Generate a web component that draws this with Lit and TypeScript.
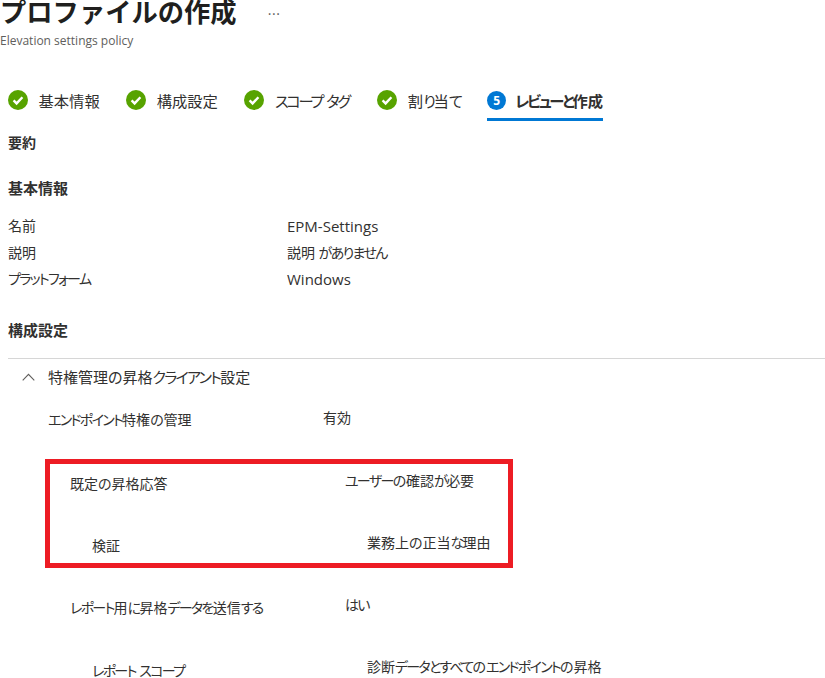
import { LitElement, html, css } from "lit";
import { customElement } from "lit/decorators.js";

const check = html`<svg class="ic" viewBox="0 0 20 20"><circle cx="10" cy="10" r="10" fill="#57a300"/><path d="M5.6 10.4l3 3 5.8-6.2" fill="none" stroke="#fff" stroke-width="2.4"/></svg>`;

// The reference font has compressed kana: runs of kana (except の) get tighter tracking.
const t = (s: string) =>
  s.split(/([ぁ-ねは-んァ-ヶー]+)/).map((p, i) => (i % 2 ? html`<span class="k">${p}</span>` : p));

@customElement("app-root")
export class AppRoot extends LitElement {
  static styles = css`
    :host { display: block; width: 825px; height: 678px; overflow: hidden; background: #fff; color: #323130;
      font-family: "Open Sans", "Noto Sans CJK JP", sans-serif; font-size: 14px; font-feature-settings: "palt"; }
    .k { letter-spacing: -1.7px; }
    .head { display: flex; align-items: center; height: 26px; margin-top: -2px; }
    h1 { margin: 0; font: 700 26.3px/26px "Noto Sans CJK JP", sans-serif; font-feature-settings: normal; color: #201f1e; }
    .more { margin: 5px 0 0 31px; font-size: 14px; line-height: 14px; color: #605e5c; letter-spacing: 0.6px; }
    .sub { font-size: 12px; line-height: 16px; color: #605e5c; margin-top: 9px; }
    .steps { display: flex; margin: 33px 0 0 8px; height: 38px; font-size: 15.3px; }
    .steps .k { letter-spacing: -2.3px; }
    .step { display: flex; align-items: center; height: 36px; margin-right: 26.5px; gap: 10.5px; white-space: nowrap; }
    .step.wide { margin-right: 28.5px; }
    .step.cur { margin: 0; gap: 9px; height: 36px; border-bottom: 3px solid #0078d4; font-weight: 700; }
    .ic { width: 20px; height: 20px; flex: none; }
    .num { width: 19px; height: 19px; border-radius: 50%; background: #0078d4; color: #fff; font: 700 12px/19px "Open Sans", sans-serif; text-align: center; }
    .body { padding-left: 8px; }
    .h { font-weight: 700; line-height: 20px; font-size: 15px; }
    .sum { margin-top: 13px; font-size: 14px; }
    .basic { margin-top: 25px; }
    .grid { margin-top: 17px; display: grid; grid-template-columns: 279px 1fr; grid-auto-rows: 26.5px; line-height: 22px; }
    .lat { font-size: 15px; }
    .conf { margin-top: 25px; padding-bottom: 18px; border-bottom: 1px solid #d6d6d6; }
    .acc { display: flex; align-items: center; margin: 7px 0 0 14px; height: 22px; gap: 13px; font-size: 15px; }
    .acc svg { width: 13px; height: 8px; }
    .row { display: grid; grid-template-columns: 275px 1fr; line-height: 22px; white-space: nowrap; }
    .r1 { margin: 21px 0 0 40px; }
    .box { margin: 28px 0 0 37px; width: 458px; height: 99px; border: 5px solid #ed1c24; }
    .r2 { margin: 9px 0 0 20px; }
    .r3 { margin: 40px 0 0 42px; }
    .r4 { margin: 29px 0 0 62px; }
    .r5 { margin: 41px 0 0 84px; }
    .up { position: relative; top: -3px; }
    .r1 .up { top: -2px; }
    .r5 .up { top: -4px; }
  `;
  render() {
    return html`
      <div class="head"><h1>プロファイルの作成</h1><span class="more">···</span></div>
      <div class="sub">Elevation settings policy</div>
      <div class="steps">
        <div class="step">${check}<span>基本情報</span></div>
        <div class="step">${check}<span>構成設定</span></div>
        <div class="step wide">${check}<span>${t("スコープ")} ${t("タグ")}</span></div>
        <div class="step">${check}<span>${t("割り当て")}</span></div>
        <div class="step cur"><span class="num">5</span><span>${t("レビューと作成")}</span></div>
      </div>
      <div class="body">
        <div class="h sum">要約</div>
        <div class="h basic">基本情報</div>
        <div class="grid">
          <span>名前</span><span class="lat">EPM-Settings</span>
          <span>説明</span><span>説明 ${t("がありません")}</span>
          <span>${t("プラットフォーム")}</span><span class="lat">Windows</span>
        </div>
        <div class="h conf">構成設定</div>
        <div class="acc"><svg viewBox="0 0 13 8"><path d="M.7 7.4L6.5 1.4l5.8 6" fill="none" stroke="#605e5c" stroke-width="1.1"/></svg><span>${t("特権管理の昇格クライアント設定")}</span></div>
        <div class="row r1"><span>${t("エンドポイント特権の管理")}</span><span class="up">有効</span></div>
        <div class="box">
          <div class="row r2"><span>既定の昇格応答</span><span class="up">${t("ユーザーの確認が必要")}</span></div>
          <div class="row r3"><span>検証</span><span class="up">${t("業務上の正当な理由")}</span></div>
        </div>
        <div class="row r4"><span>${t("レポート用に昇格データを送信する")}</span><span class="up">${t("はい")}</span></div>
        <div class="row r5"><span>${t("レポート")} ${t("スコープ")}</span><span class="up">${t("診断データとすべてのエンドポイントの昇格")}</span></div>
      </div>
    `;
  }
}
